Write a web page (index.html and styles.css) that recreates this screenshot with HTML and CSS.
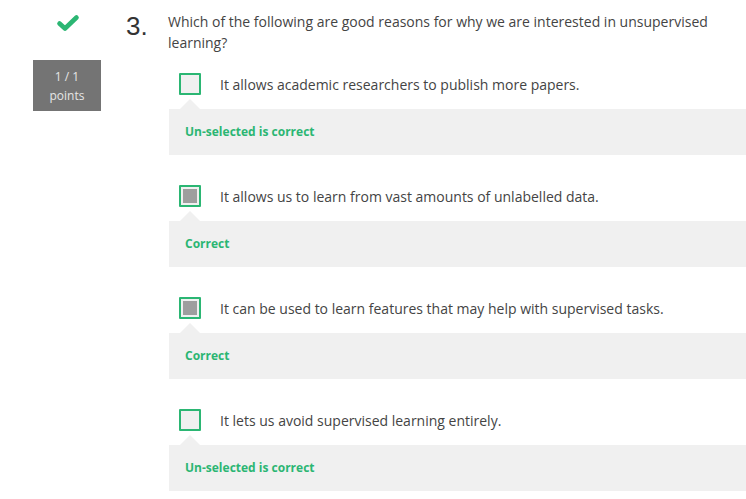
FILE: index.html
```html
<!DOCTYPE html>
<html>
<head>
<meta charset="utf-8">
<link rel="stylesheet" href="styles.css">
</head>
<body>
<div class="page">
  <div class="side">
    <svg class="tick" width="24" height="18" viewBox="0 0 24 18">
      <path d="M3.5 9.5 L9 14.5 L20.5 3.5" fill="none" stroke="#2bb673" stroke-width="4.6" stroke-linecap="round" stroke-linejoin="round"/>
    </svg>
    <div class="points">1 / 1<br>points</div>
  </div>
  <div class="main">
    <div class="qhead">
      <div class="num">3.</div>
      <div class="qtext">Which of the following are good reasons for why we are interested in unsupervised learning?</div>
    </div>
    <div class="options">
      <div class="option">
        <div class="row"><span class="box"></span><span class="label">It allows academic researchers to publish more papers.</span></div>
        <div class="feedback">Un-selected is correct</div>
      </div>
      <div class="option">
        <div class="row"><span class="box checked"></span><span class="label">It allows us to learn from vast amounts of unlabelled data.</span></div>
        <div class="feedback">Correct</div>
      </div>
      <div class="option">
        <div class="row"><span class="box checked"></span><span class="label">It can be used to learn features that may help with supervised tasks.</span></div>
        <div class="feedback">Correct</div>
      </div>
      <div class="option">
        <div class="row"><span class="box"></span><span class="label">It lets us avoid supervised learning entirely.</span></div>
        <div class="feedback">Un-selected is correct</div>
      </div>
    </div>
  </div>
</div>
</body>
</html>
```

FILE: styles.css
```css
html, body {
  margin: 0;
  padding: 0;
  background: #fff;
  overflow: hidden;
}
body {
  font-family: "Open Sans", "Liberation Sans", sans-serif;
  color: #444;
}
.page {
  display: flex;
  width: 746px;
}
.side {
  width: 68px;
  margin-left: 33px;
  display: flex;
  flex-direction: column;
  align-items: center;
  padding-top: 14px;
}
.tick {
  display: block;
  margin-left: 1px;
}
.points {
  margin-top: 28px;
  width: 68px;
  height: 51px;
  box-sizing: border-box;
  padding-top: 7px;
  background: #747474;
  color: #e6e6e6;
  font-size: 12px;
  line-height: 19px;
  text-align: center;
}
.main {
  flex: 1;
  margin-left: 25px;
  min-width: 0;
}
.qhead {
  display: flex;
  padding-top: 11px;
}
.num {
  width: 42px;
  flex: none;
  font-family: "Liberation Sans", Arial, sans-serif;
  font-size: 26px;
  line-height: 30px;
  color: #333;
  margin-top: 0;
}
.qtext {
  font-size: 14px;
  line-height: 21px;
  color: #444;
  padding-right: 20px;
}
.options {
  margin-left: 43px;
  margin-top: 20px;
  display: flex;
  flex-direction: column;
  gap: 30px;
}
.row {
  display: flex;
  align-items: center;
  padding-left: 10px;
  height: 22px;
}
.box {
  width: 22px;
  height: 22px;
  box-sizing: border-box;
  border: 2px solid #2bb673;
  border-radius: 1px;
  background: #f0f0f0;
  flex: none;
  position: relative;
}
.box.checked::after {
  content: "";
  position: absolute;
  left: 2px;
  top: 2px;
  width: 14px;
  height: 14px;
  background: #9e9e9e;
}
.label {
  margin-left: 19px;
  font-size: 14px;
  line-height: 21px;
  color: #444;
  white-space: nowrap;
}
.feedback {
  position: relative;
  margin-top: 14px;
  height: 46px;
  box-sizing: border-box;
  padding-left: 16px;
  background: #f0f0f0;
  color: #2bb673;
  font-size: 12px;
  font-weight: 700;
  line-height: 46px;
}
.feedback::before {
  content: "";
  position: absolute;
  left: 11px;
  top: -10px;
  border-left: 10px solid transparent;
  border-right: 10px solid transparent;
  border-bottom: 10px solid #f0f0f0;
}
```
